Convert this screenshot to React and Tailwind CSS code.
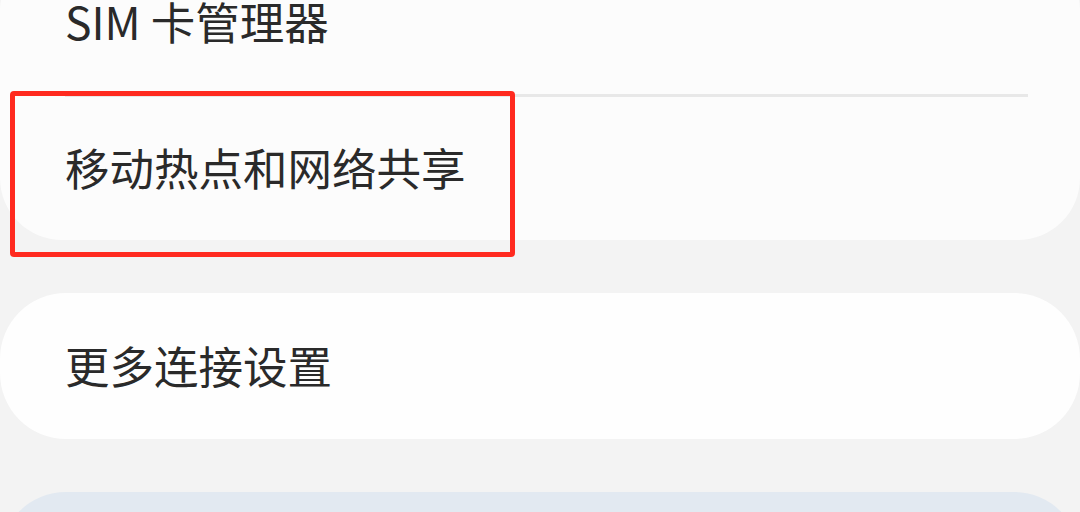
import * as React from "react";

const font = { fontFamily: '"Noto Sans CJK SC", "Noto Sans", sans-serif' };

const Row = ({ children, className = "" }) => (
  <div className={`flex items-center pl-[65px] text-[44.5px] font-normal leading-none text-[#2a2a2a] ${className}`}>
    {children}
  </div>
);

export default function App() {
  return (
    <div className="relative w-[1080px] h-[512px] overflow-hidden bg-[#f3f3f3]" style={font}>
      {/* connections group */}
      <div className="-mt-[52px] rounded-[62px] bg-[#fcfcfc]">
        <Row className="h-[146px]">SIM 卡管理器</Row>
        <div className="ml-[65px] mr-[52px] h-[3px] bg-[#e8e8e8]" />
        <Row className="h-[143px] pb-[2px]">移动热点和网络共享</Row>
      </div>

      <div className="mt-[53px] rounded-[66px] bg-[#fefefe]">
        <Row className="h-[146px] pb-[2px]">更多连接设置</Row>
      </div>

      <div className="mt-[53px] h-[146px] rounded-[66px] bg-[#e2e9f1]" />

      {/* highlight annotation */}
      <div className="absolute left-[10px] top-[91px] w-[505px] h-[166px] rounded-[4px] border-[5px] border-[#ff2a1f]" />
    </div>
  );
}
